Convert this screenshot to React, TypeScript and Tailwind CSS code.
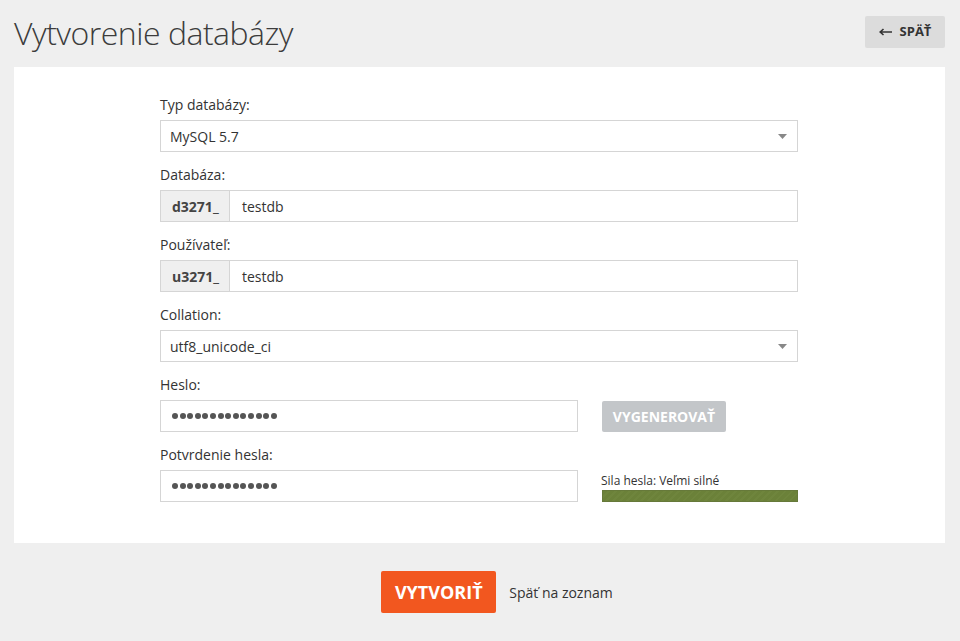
const labelCls = 'block text-[14px] leading-[20px] text-[#333] mb-[5px]'
const boxCls = 'h-[32px] border border-[#d5d5d5] bg-white flex items-center text-[14px] text-[#333]'

function Select({ value }: { value: string }) {
    return (
        <div className={`${boxCls} justify-between pl-[9px] pr-[9px]`}>
            <span>{value}</span>
            <svg width="9" height="5" viewBox="0 0 9 5" className="mr-[1px]">
                <path d="M0 0 L9 0 L4.5 5 Z" fill="#888" />
            </svg>
        </div>
    )
}

function Prefixed({ prefix, value }: { prefix: string; value: string }) {
    return (
        <div className={`${boxCls}`}>
            <div className="h-full w-[69px] bg-[#efefef] border-r border-[#d5d5d5] flex items-center pl-[11px] font-bold text-[#444]">
                {prefix}
            </div>
            <span className="pl-[12px]">{value}</span>
        </div>
    )
}

function Password() {
    return (
        <div className={`${boxCls} pl-[11px]`}>
            {Array.from({ length: 14 }).map((_, i) => (
                <span key={i} className="w-[6px] h-[6px] rounded-full bg-[#555] mr-[1.6px]" />
            ))}
        </div>
    )
}

export default function App() {
    return (
        <div
            className="w-[960px] h-[641px] bg-[#efefef] px-[14px] pt-[16px]"
            style={{ fontFamily: '"Open Sans", "Noto Sans", sans-serif' }}
        >
            <div className="flex items-start justify-between h-[51px]">
                <h1 className="text-[32px] leading-[36px] font-light tracking-[-0.5px] text-[#3c3c3c] -mt-[1px]">
                    Vytvorenie databázy
                </h1>
                <button className="h-[32px] w-[80px] bg-[#dcdcdc] rounded-[2px] flex items-center justify-center gap-[8px] text-[13px] font-bold text-[#333] mr-[1px]">
                    <svg width="13" height="8" viewBox="0 0 13 8">
                        <path d="M13 4 H1.5 M4.5 1 L1.2 4 L4.5 7" stroke="#333" strokeWidth="1.6" fill="none" />
                    </svg>
                    SPÄŤ
                </button>
            </div>

            <div className="bg-white w-[931px] h-[476px] pt-[28px]">
                <div className="w-[638px] ml-[146px]">
                    <div className="mb-[13px]">
                        <label className={labelCls}>Typ databázy:</label>
                        <Select value="MySQL 5.7" />
                    </div>
                    <div className="mb-[13px]">
                        <label className={labelCls}>Databáza:</label>
                        <Prefixed prefix="d3271_" value="testdb" />
                    </div>
                    <div className="mb-[13px]">
                        <label className={labelCls}>Používateľ:</label>
                        <Prefixed prefix="u3271_" value="testdb" />
                    </div>
                    <div className="mb-[13px]">
                        <label className={labelCls}>Collation:</label>
                        <Select value="utf8_unicode_ci" />
                    </div>
                    <div className="mb-[13px] flex gap-[24px]">
                        <div className="w-[418px]">
                            <label className={labelCls}>Heslo:</label>
                            <Password />
                        </div>
                        <div className="pt-[26px]">
                            <button className="h-[31px] w-[124px] bg-[#c3c6c9] rounded-[2px] text-white font-bold text-[14px]">
                                VYGENEROVAŤ
                            </button>
                        </div>
                    </div>
                    <div className="flex gap-[24px]">
                        <div className="w-[418px]">
                            <label className={labelCls}>Potvrdenie hesla:</label>
                            <Password />
                        </div>
                        <div className="w-[196px] pt-[28px]">
                            <div className="text-[12px] leading-[16px] text-[#333] -ml-[1px]">Sila hesla: Veľmi silné</div>
                            <div className="h-[12px] border border-[#66793a] mt-[1px] bg-[repeating-linear-gradient(135deg,#6b8139_0px,#6b8139_3px,#6f853d_3px,#6f853d_5px)]" />
                        </div>
                    </div>
                </div>
            </div>

            <div className="flex items-center justify-center pl-[34px] mt-[28px]">
                <button className="h-[42px] w-[115px] bg-[#f2571f] rounded-[2px] text-white font-bold text-[18px]">
                    VYTVORIŤ
                </button>
                <span className="ml-[13px] text-[14px] text-[#333]">Späť na zoznam</span>
            </div>
        </div>
    )
}
